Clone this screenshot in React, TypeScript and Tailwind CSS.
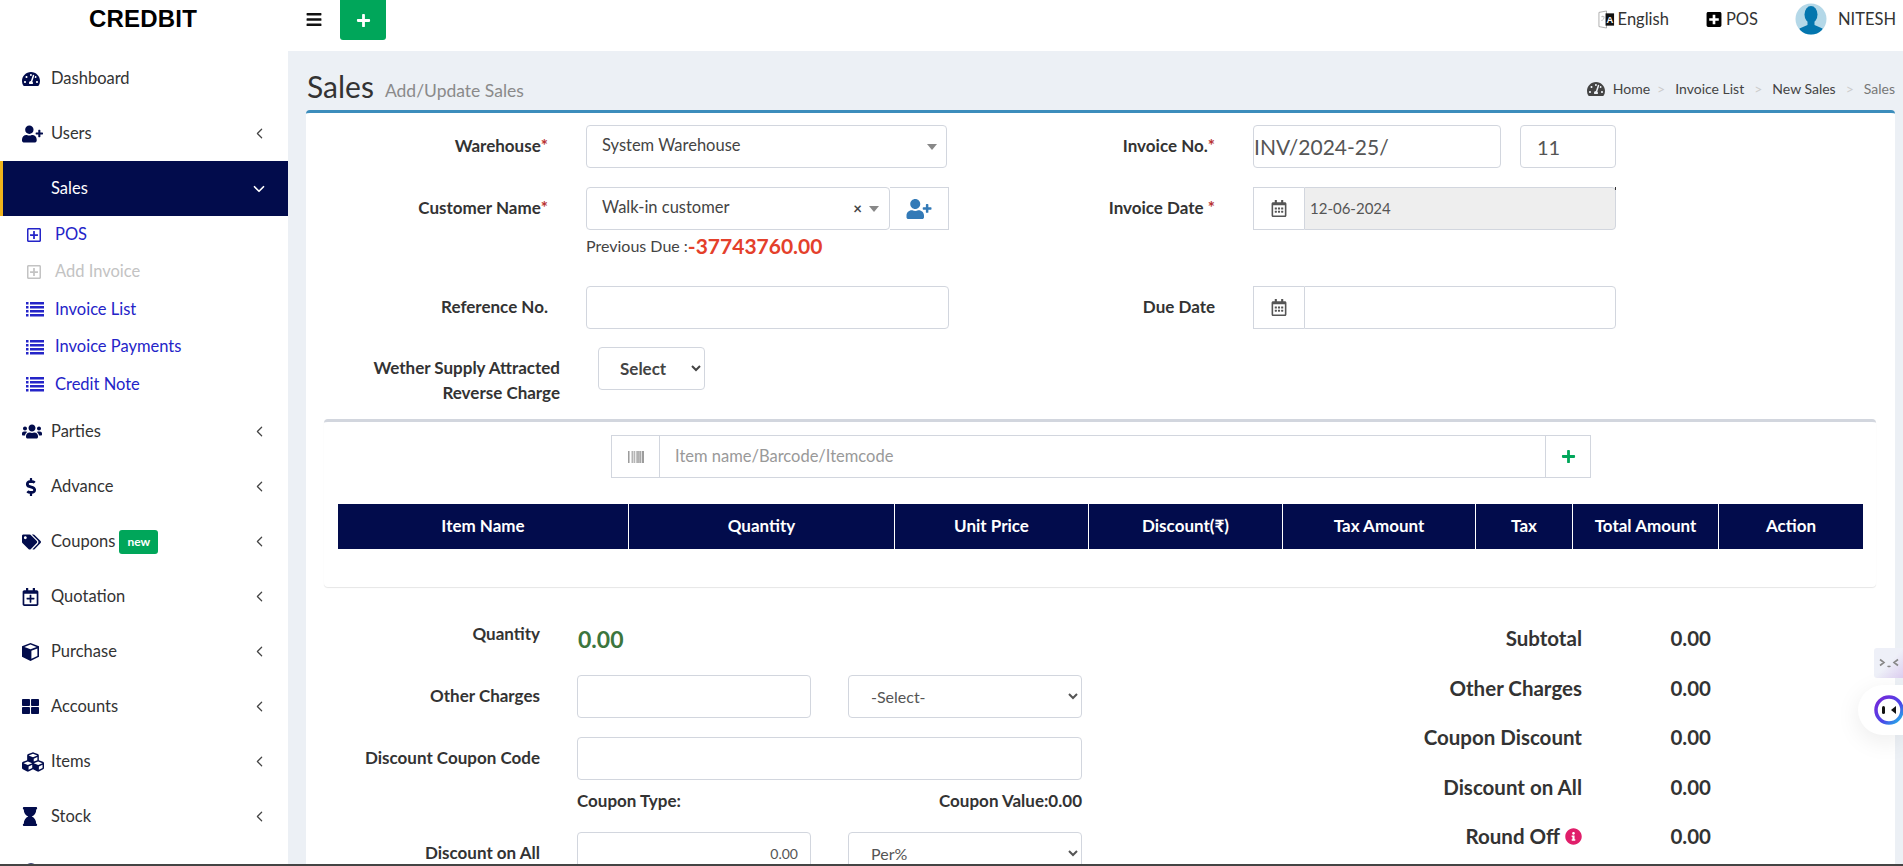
import type { ReactNode } from "react";
import {
  FaBars, FaBarcode, FaCubes, FaDollarSign, FaHourglass, FaInfoCircle, FaPlus,
  FaPlusSquare, FaRegCalendarAlt, FaRegCalendarPlus, FaRegPlusSquare, FaTachometerAlt, FaTags,
  FaThLarge, FaUserPlus, FaUsers, FaUserCircle,
} from "react-icons/fa";
import { ChevronDown, ChevronLeft } from "lucide-react";

const navIcon = "h-[18px] w-[18px] text-[#020c4c]";

// font awesome 4 style list, square bullets and four bars
function ListIcon() {
  return (
    <svg viewBox="0 0 18 15" className="h-[15px] w-[18px]" fill="currentColor">
      <path d="M0 0h2.5v2.5H0zM4 0h14v2.5H4zM0 4h2.5v2.5H0zM4 4h14v2.5H4zM0 8h2.5v2.5H0zM4 8h14v2.5H4zM0 12h2.5v2.5H0zM4 12h14v2.5H4z" />
    </svg>
  );
}

function CubeIcon() {
  return (
    <svg viewBox="0 0 17 18" className="h-[18px] w-[17px] text-[#020c4c]">
      <path d="M8.5 0 17 3.2v10.6L8.5 18 0 13.8V3.2z" fill="currentColor" />
      <path d="M8.5 1.6 14.6 3.9 8.5 6.2 2.4 3.9z" fill="#fff" />
      <path d="M9.4 7.8 15.4 5.4v7.5L9.4 15.8z" fill="#fff" />
    </svg>
  );
}

const menuTop = [
  { name: "Dashboard", icon: <FaTachometerAlt className={navIcon} />, arrow: false },
  { name: "Users", icon: <FaUserPlus className="h-[18px] w-[21px] text-[#020c4c]" />, arrow: true },
];

const subMenu = [
  { name: "POS", icon: <FaRegPlusSquare className="h-4 w-4" />, muted: false },
  { name: "Add Invoice", icon: <FaRegPlusSquare className="h-4 w-4" />, muted: true },
  { name: "Invoice List", icon: <ListIcon />, muted: false },
  { name: "Invoice Payments", icon: <ListIcon />, muted: false },
  { name: "Credit Note", icon: <ListIcon />, muted: false },
];

const menuBottom = [
  { name: "Parties", icon: <FaUsers className="h-[21px] w-[20px] text-[#020c4c]" /> },
  { name: "Advance", icon: <FaDollarSign className={navIcon} /> },
  { name: "Coupons", icon: <FaTags className="h-[18px] w-[19px] text-[#020c4c]" />, badge: true },
  { name: "Quotation", icon: <FaRegCalendarPlus className="h-[18px] w-[17px] text-[#020c4c]" /> },
  { name: "Purchase", icon: <CubeIcon /> },
  { name: "Accounts", icon: <FaThLarge className="h-[17px] w-[17px] text-[#020c4c]" /> },
  { name: "Items", icon: <FaCubes className="h-[22px] w-[22px] text-[#020c4c]" /> },
  { name: "Stock", icon: <FaHourglass className="h-[19px] w-[16px] text-[#020c4c]" /> },
  { name: "Reports", icon: <FaUserCircle className="h-[18px] w-[18px] text-[#020c4c]" /> },
];

const columns = [
  { name: "Item Name", cls: "" },
  { name: "Quantity", cls: "border-l border-white" },
  { name: "Unit Price", cls: "border-l border-white" },
  { name: "Discount(₹)", cls: "border-l border-white" },
  { name: "Tax Amount", cls: "border-l border-white" },
  { name: "Tax", cls: "border-l border-white" },
  { name: "Total Amount", cls: "border-l border-white" },
  { name: "Action", cls: "border-l border-white" },
];

const totals = ["Subtotal", "Other Charges", "Coupon Discount", "Discount on All", "Round Off"];

const inputCls = "h-[43px] rounded border border-[#d2d6de] bg-white px-3 text-[14px] text-[#555] outline-none";
const labelCls = "pb-[2px] text-[17px] font-bold text-[#333]";

function Req() {
  return <span className="text-[#b83232]">*</span>;
}

function NavRow({ icon, name, badge, arrow = true }: { icon: ReactNode; name: string; badge?: boolean; arrow?: boolean }) {
  return (
    <div className="flex h-[55px] items-center text-[16.5px] text-[#333]">
      <span className="flex w-[51px] shrink-0 justify-start pl-[22px]">{icon}</span>
      <span className="pb-px">{name}</span>
      {badge && (
        <span className="ml-1 rounded-[3px] bg-[#00a65a] px-2 py-[3px] text-[12px] leading-[18px] font-bold text-white">new</span>
      )}
      {arrow && <ChevronLeft className="mr-[20px] ml-auto h-[17px] w-[17px] text-[#444]" strokeWidth={1.75} />}
    </div>
  );
}

function Sidebar() {
  return (
    <aside className="w-[288px] shrink-0 bg-white">
      {menuTop.map((m) => (
        <NavRow key={m.name} icon={m.icon} name={m.name} arrow={m.arrow} />
      ))}
      <div className="flex h-[55px] items-center border-l-[3px] border-[#f0b41c] bg-[#020c4c] pl-[48px] text-[16.5px] text-white">
        <span className="pb-px">Sales</span>
        <ChevronDown className="mr-[20px] ml-auto h-[18px] w-[18px]" strokeWidth={2.25} />
      </div>
      <div className="pb-[0.5px]">
        {subMenu.map((s) => (
          <div
            key={s.name}
            className={`flex h-[37.5px] items-center pl-[26px] text-[16.5px] ${s.muted ? "text-[#c3c3c3]" : "text-[#2424c8]"}`}
          >
            <span className="w-[29px] shrink-0">{s.icon}</span>
            <span className="pb-px">{s.name}</span>
          </div>
        ))}
      </div>
      {menuBottom.map((m) => (
        <NavRow key={m.name} icon={m.icon} name={m.name} badge={m.badge} />
      ))}
    </aside>
  );
}

function Header() {
  return (
    <header className="flex h-[51px] shrink-0 items-start bg-white">
      <div className="w-[288px] pt-[3px] pl-[89px] font-['Liberation_Sans',sans-serif] text-[24px] leading-[32px] font-bold tracking-[0.2px] text-black">
        CREDBIT
      </div>
      <FaBars className="mt-[11px] ml-[18px] h-[17px] w-[16px] text-[#111]" />
      <div className="ml-[18px] flex h-[40px] w-[46px] items-center justify-center rounded-b-[3px] bg-[#00a65a]">
        <FaPlus className="h-[15px] w-[15px] text-white" />
      </div>
      <div className="ml-auto flex h-[38px] items-center pr-[7px] text-[16.5px] text-[#333]">
        <svg viewBox="0 0 18 20" className="h-[19px] w-[17px]">
          <path d="M1 2.5 9 1v18l-8-1.5z" fill="#fff" stroke="#999" strokeWidth="0.8" />
          <path d="M3.5 7h3M5 6v1M3.5 11c2 0 3-2 3-4" fill="none" stroke="#aaa" strokeWidth="0.8" />
          <rect x="8" y="3.5" width="9" height="13" fill="#111" />
          <text x="12.5" y="14" textAnchor="middle" fontSize="10" fontWeight="700" fill="#fff" fontFamily="Liberation Sans">A</text>
        </svg>
        <span className="ml-[3px]">English</span>
        <FaPlusSquare className="ml-[37px] h-[17px] w-[16px] text-black" />
        <span className="ml-[4px]">POS</span>
        <svg viewBox="0 0 32 32" className="ml-[37px] h-[32px] w-[32px]">
          <defs>
            <clipPath id="av">
              <circle cx="16" cy="16" r="15.5" />
            </clipPath>
          </defs>
          <circle cx="16" cy="16" r="15.5" fill="#b4d8e8" />
          <g clipPath="url(#av)" fill="#0476ae">
            <ellipse cx="16" cy="11.5" rx="6.5" ry="8.5" />
            <path d="M12.5 17h7v5l8 3.5V33H4.5v-7.5l8-3.5z" />
          </g>
        </svg>
        <span className="ml-[11px]">NITESH</span>
      </div>
    </header>
  );
}

function DateGroup({ value, disabled }: { value?: string; disabled?: boolean }) {
  return (
    <div className="relative flex h-[43px] w-[363px]">
      <span className="flex w-[51px] shrink-0 items-center justify-center border border-r-0 border-[#d2d6de] bg-white">
        <FaRegCalendarAlt className="h-[17px] w-[16px] text-[#555]" />
      </span>
      <input
        readOnly
        defaultValue={value}
        className={`min-w-0 flex-1 rounded-r border border-[#d2d6de] pr-3 pl-[5px] text-[15px] text-[#555] outline-none ${disabled ? "bg-[#eee]" : "bg-white"}`}
      />
      {disabled && <span className="absolute top-0 right-0 h-[3px] w-px bg-[#333]" />}
    </div>
  );
}

function FormTop() {
  return (
    <div className="pt-[12px]">
      <div className="flex h-[62px] items-start">
        <div className={`${labelCls} flex h-[43px] w-[242px] items-center justify-end`}>Warehouse<Req /></div>
        <div className="ml-[38px] flex h-[43px] w-[361px] items-center rounded border border-[#d2d6de] pr-[5px] pl-[15px] text-[16.5px] text-[#444]">
          <span className="pb-[2px]">System Warehouse</span>
          <svg viewBox="0 0 10 6" className="mr-[4px] ml-auto h-[6px] w-[10px]"><path d="M0 0h10L5 6z" fill="#888" /></svg>
        </div>
        <div className={`${labelCls} ml-[58px] flex h-[43px] w-[210px] items-center justify-end`}>Invoice No.<Req /></div>
        <input readOnly defaultValue="INV/2024-25/" className={`${inputCls} ml-[38px] w-[248px] !px-0 !text-[21px]`} />
        <input readOnly defaultValue="11" className={`${inputCls} ml-[19px] w-[96px] !px-4 !text-[20px]`} />
      </div>
      <div className="flex h-[99px] items-start">
        <div className={`${labelCls} flex h-[43px] w-[242px] items-center justify-end`}>Customer Name<Req /></div>
        <div className="ml-[38px] w-[363px]">
          <div className="flex h-[43px]">
            <div className="flex flex-1 items-center rounded border border-[#d2d6de] pr-[5px] pl-[15px] text-[16.5px] text-[#444]">
              <span className="pb-[2px]">Walk-in customer</span>
              <span className="ml-auto text-[15px] font-bold text-[#444]">×</span>
              <svg viewBox="0 0 10 6" className="mr-[5px] ml-[7px] h-[6px] w-[10px]"><path d="M0 0h10L5 6z" fill="#888" /></svg>
            </div>
            <span className="flex w-[59px] items-center justify-center border border-l-0 border-[#d2d6de]">
              <FaUserPlus className="h-[20px] w-[26px] text-[#337ab7]" />
            </span>
          </div>
          <div className="flex items-center text-[16px] leading-[32px] text-[#444]">
            Previous Due :<span className="text-[21px] font-bold text-[#e4402b]">-37743760.00</span>
          </div>
        </div>
        <div className={`${labelCls} ml-[56px] flex h-[43px] w-[210px] items-center justify-end`}>Invoice Date&nbsp;<Req /></div>
        <div className="ml-[38px]"><DateGroup value="12-06-2024" disabled /></div>
      </div>
      <div className="flex h-[61px] items-start">
        <div className={`${labelCls} flex h-[43px] w-[242px] items-center justify-end`}>Reference No.</div>
        <input readOnly className={`${inputCls} ml-[38px] w-[363px]`} />
        <div className={`${labelCls} ml-[56px] flex h-[43px] w-[210px] items-center justify-end`}>Due Date</div>
        <div className="ml-[38px]"><DateGroup /></div>
      </div>
      <div className="flex h-[72px] items-start">
        <div className={`${labelCls} w-[254px] pt-[8px] text-right leading-[25px]`}>
          Wether Supply Attracted<br />Reverse Charge
        </div>
        <select defaultValue="Select" className="ml-[38px] h-[43px] w-[107px] rounded border border-[#d2d6de] bg-white pl-[17px] text-[17px] font-bold text-[#444] outline-none">
          <option>Select</option>
        </select>
      </div>
    </div>
  );
}

function ItemsCard() {
  return (
    <div className="mr-[19px] ml-[18px] h-[168px] rounded border-t-[3px] border-[#d2d6de] bg-white shadow-[0_1px_1px_rgba(0,0,0,0.1)]">
      <div className="mt-[13px] ml-[287px] flex h-[43px] w-[980px] border border-[#d2d6de]">
        <span className="flex w-[48px] items-center justify-center border-r border-[#d2d6de]">
          <FaBarcode className="h-[16px] w-[20px] text-[#777]" />
        </span>
        <input readOnly placeholder="Item name/Barcode/Itemcode" className="min-w-0 flex-1 px-[15px] text-[16.5px] text-[#555] outline-none placeholder:text-[#999]" />
        <span className="flex w-[45px] items-center justify-center border-l border-[#d2d6de]">
          <FaPlus className="h-[15px] w-[15px] text-[#00a65a]" />
        </span>
      </div>
      <div className="mt-[26px] ml-[14px] grid h-[45px] w-[1525px] grid-cols-[290px_266px_194px_194px_193px_97px_146px_145px] bg-[#020c4c]">
        {columns.map((c) => (
          <div key={c.name} className={`flex items-center justify-center pb-[2px] text-[17px] font-bold text-white ${c.cls}`}>
            {c.name}
          </div>
        ))}
      </div>
    </div>
  );
}

function Summary() {
  return (
    <div className="flex">
      <div className="w-[776px]">
        <div className="flex h-[88px] items-start pt-[34px]">
          <div className={`${labelCls} w-[234px] text-right`}>Quantity</div>
          <div className="ml-[38px] pt-[2px] text-[23px] leading-[32px] font-bold text-[#3c763d]">0.00</div>
        </div>
        <div className="flex h-[62px] items-start">
          <div className={`${labelCls} flex h-[43px] w-[234px] items-center justify-end`}>Other Charges</div>
          <input readOnly className={`${inputCls} ml-[37px] w-[234px]`} />
          <select defaultValue="-Select-" className="ml-[37px] h-[43px] w-[234px] rounded border border-[#d2d6de] bg-white pl-[18px] text-[16px] text-[#555] outline-none">
            <option>-Select-</option>
          </select>
        </div>
        <div className="flex items-start">
          <div className={`${labelCls} flex h-[43px] w-[234px] items-center justify-end`}>Discount Coupon Code</div>
          <input readOnly className={`${inputCls} ml-[37px] w-[505px]`} />
        </div>
        <div className={`${labelCls} mt-[9px] ml-[271px] flex h-[26px] w-[505px] items-center justify-between`}>
          <span>Coupon Type:</span>
          <span>Coupon Value:0.00</span>
        </div>
        <div className="mt-[17px] flex items-start">
          <div className={`${labelCls} flex h-[43px] w-[234px] items-center justify-end`}>Discount on All</div>
          <input readOnly defaultValue="0.00" className={`${inputCls} ml-[37px] w-[234px] text-right`} />
          <select defaultValue="Per%" className="ml-[37px] h-[43px] w-[234px] rounded border border-[#d2d6de] bg-white pl-[18px] text-[16px] text-[#555] outline-none">
            <option>Per%</option>
          </select>
        </div>
      </div>
      <div className="ml-[224px] w-[405px] pt-[27px]">
        {totals.map((t) => (
          <div key={t} className="flex h-[49.5px] items-center text-[20.5px] font-bold text-[#333]">
            <span className="flex w-[276px] items-center justify-end">
              {t}
              {t === "Round Off" && <FaInfoCircle className="ml-[5px] h-[17px] w-[17px] text-[#e01e6a]" />}
            </span>
            <span className="w-[129px] text-right">0.00</span>
          </div>
        ))}
      </div>
    </div>
  );
}

function Widget() {
  return (
    <>
      <div className="absolute top-[648px] right-0 flex h-[30px] w-[29px] items-center justify-center rounded-l-[3px] bg-gradient-to-br from-[#eef0f8] via-[#eef0f8] to-[#dccdf0]">
        <svg viewBox="0 0 20 10" className="h-[10px] w-[20px]" fill="none" stroke="#888" strokeWidth="1.6">
          <path d="M1 1.5 5 4.5 1 7.5M19 1.5 15 4.5 19 7.5M8.5 8c1 .8 2 .8 3 0" />
        </svg>
      </div>
      <div className="absolute top-[685px] right-0 flex h-[50px] w-[45px] items-center rounded-l-[25px] bg-white pl-[16px] shadow-[0_6px_24px_rgba(0,0,0,0.08)]">
        <svg viewBox="0 0 30 30" className="h-[30px] w-[30px] shrink-0">
          <defs>
            <linearGradient id="ring" x1="0" y1="0" x2="1" y2="1">
              <stop offset="0" stopColor="#7a25d8" />
              <stop offset="0.6" stopColor="#4a48e8" />
              <stop offset="1" stopColor="#1fc0e8" />
            </linearGradient>
          </defs>
          <circle cx="15" cy="15" r="13" fill="#fff" stroke="url(#ring)" strokeWidth="3.5" />
          <rect x="8" y="11" width="3" height="8" rx="1.5" fill="#111" />
          <path d="M22 11l-5 4 5 4z" fill="#111" />
        </svg>
      </div>
    </>
  );
}

export default function App() {
  return (
    <div className="relative flex h-[866px] flex-col overflow-hidden border-b-2 border-[#444] bg-white font-['Lato',sans-serif]">
      <Header />
      <div className="flex min-h-0 flex-1">
        <Sidebar />
        <main className="min-w-0 flex-1 bg-[#ecf0f5] pr-[8px] pl-[18px]">
          <div className="flex h-[59px] items-end pb-[4px]">
            <h1 className="pl-px text-[30px] leading-[40px] text-[#333]">Sales</h1>
            <span className="mb-[3px] ml-[11px] text-[17.5px] leading-[24px] text-[#8a8a8a]">Add/Update Sales</span>
            <div className="mb-[7px] ml-auto flex items-center text-[14px] text-[#444]">
              <FaTachometerAlt className="mr-[8px] h-[18px] w-[18px]" />
              <span>Home</span>
              <span className="mr-[10px] ml-[7px] text-[#ccc]">&gt;</span>
              <span>Invoice List</span>
              <span className="mx-[10px] text-[#ccc]">&gt;</span>
              <span>New Sales</span>
              <span className="mx-[10px] text-[#ccc]">&gt;</span>
              <span className="text-[#777]">Sales</span>
            </div>
          </div>
          <section className="h-[800px] rounded-t border-t-[3px] border-[#3c8dbc] bg-white">
            <FormTop />
            <ItemsCard />
            <Summary />
          </section>
        </main>
      </div>
      <Widget />
    </div>
  );
}
